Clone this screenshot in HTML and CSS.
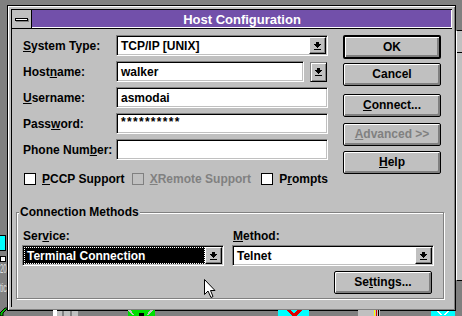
FILE: index.html
```html
<!DOCTYPE html>
<html>
<head>
<meta charset="utf-8">
<title>Host Configuration</title>
<link rel="stylesheet" href="styles.css">
</head>
<body>
<div class="desktop">
  <div class="behind"><div class="behind-line"></div></div>
  <div class="ico-cyan"></div>
  <div class="ico-small"></div>
  <div class="frag frag-a">20</div>
  <div class="frag frag-b">tic</div>
  <svg class="strip-left" width="8" height="12" viewBox="0 0 8 12">
    <path d="M0 9 L5 4 L8 4 L3 9 L3 12 L0 12 Z" fill="#00c000" stroke="#000" stroke-width="1"/>
  </svg>
  <svg class="strip-bottom" width="462" height="6" viewBox="0 0 462 6" shape-rendering="crispEdges">
    <rect x="53" y="0" width="4" height="6" fill="#fff"/>
    <rect x="57" y="1" width="21" height="5" fill="#c0c0c0"/>
    <rect x="62" y="1" width="2" height="5" fill="#808080"/>
    <rect x="70" y="1" width="2" height="5" fill="#808080"/>
    <rect x="128" y="0" width="27" height="6" fill="#00e000"/>
    <path d="M128 0 L132 5 L134 5 L131 0 Z M150 0 L147 5 L149 5 L153 0 Z" fill="#c0c0c0"/>
    <rect x="139" y="3" width="5" height="3" fill="#000"/>
    <rect x="278" y="0" width="31" height="6" fill="#00ffff"/>
    <path d="M286 0 L290 0 L294 3 L298 0 L303 0 L297 5 L296 6 L292 6 L291 5 Z" fill="#e00000"/>
    <rect x="358" y="0" width="22" height="6" fill="#c0c0c0"/>
    <rect x="374" y="0" width="1" height="6" fill="#ffff00"/>
    <rect x="376" y="0" width="1" height="6" fill="#e00000"/>
    <rect x="378" y="0" width="1" height="6" fill="#000"/>
    <rect x="431" y="1" width="24" height="5" fill="#00ffff"/>
    <path d="M436 1 L440 5 L442 5 L438 1 Z M449 1 L445 5 L443 5 L447 1 Z" fill="#fff"/>
  </svg>

  <div class="window">
    <div class="frame">
      <div class="titlebar">
        <div class="sysmenu"><span class="dash"></span></div>
        <div class="caption">Host Configuration</div>
      </div>
      <div class="client">
        <div class="top">
          <div class="form">
            <div class="row">
              <span class="lbl"><u>S</u>ystem Type:</span>
              <div class="sunken combo">
                <span class="val">TCP/IP [UNIX]</span>
                <span class="dd"><svg width="7" height="8" viewBox="0 0 7 8" shape-rendering="crispEdges"><path d="M2 0h3v2h2v1h-1v1h-1v1h-1v1h-1v-1h-1v-1h-1v-1h-1v-1h2z M0 7h7v1h-7z" fill="#000"/></svg></span>
              </div>
            </div>
            <div class="row">
              <span class="lbl">Host<u>n</u>ame:</span>
              <div class="sunken edit edit-short"><span class="val">walker</span></div>
              <span class="dd dd-sep"><svg width="7" height="8" viewBox="0 0 7 8" shape-rendering="crispEdges"><path d="M2 0h3v2h2v1h-1v1h-1v1h-1v1h-1v-1h-1v-1h-1v-1h-1v-1h2z M0 7h7v1h-7z" fill="#000"/></svg></span>
            </div>
            <div class="row">
              <span class="lbl"><u>U</u>sername:</span>
              <div class="sunken edit"><span class="val">asmodai</span></div>
            </div>
            <div class="row">
              <span class="lbl">Pass<u>w</u>ord:</span>
              <div class="sunken edit"><span class="val pw">**********</span></div>
            </div>
            <div class="row">
              <span class="lbl">Phone Num<u>b</u>er:</span>
              <div class="sunken edit"><span class="val"></span></div>
            </div>
            <div class="checks">
              <div class="check check-a"><span class="box"></span><span><u>P</u>CCP Support</span></div>
              <div class="check check-b disabled"><span class="box"></span><span><u>X</u>Remote Support</span></div>
              <div class="check"><span class="box"></span><span>P<u>r</u>ompts</span></div>
            </div>
          </div>
          <div class="buttons">
            <div class="btn default">OK</div>
            <div class="btn b-cancel">Cancel</div>
            <div class="btn b-connect"><span><u>C</u>onnect...</span></div>
            <div class="btn b-adv disabled"><span><u>A</u>dvanced &gt;&gt;</span></div>
            <div class="btn b-help"><span><u>H</u>elp</span></div>
          </div>
        </div>
        <div class="group">
          <div class="legend">Connection Methods</div>
          <div class="methods">
            <div class="col">
              <div class="lbl2">Ser<u>v</u>ice:</div>
              <div class="sunken combo">
                <span class="val sel">Terminal Connection</span>
                <span class="dd"><svg width="7" height="8" viewBox="0 0 7 8" shape-rendering="crispEdges"><path d="M2 0h3v2h2v1h-1v1h-1v1h-1v1h-1v-1h-1v-1h-1v-1h-1v-1h2z M0 7h7v1h-7z" fill="#000"/></svg></span>
              </div>
            </div>
            <div class="col">
              <div class="lbl2"><u>M</u>ethod:</div>
              <div class="sunken combo">
                <span class="val">Telnet</span>
                <span class="dd"><svg width="7" height="8" viewBox="0 0 7 8" shape-rendering="crispEdges"><path d="M2 0h3v2h2v1h-1v1h-1v1h-1v1h-1v-1h-1v-1h-1v-1h-1v-1h2z M0 7h7v1h-7z" fill="#000"/></svg></span>
              </div>
            </div>
          </div>
          <div class="settings-row">
            <div class="btn b-settings"><span>Se<u>t</u>tings...</span></div>
          </div>
        </div>
      </div>
    </div>
  </div>

  <svg class="cursor" width="12" height="19" viewBox="0 0 12 19">
    <path d="M0.5 0.5 L0.5 15.5 L4 12 L7 18.5 L9 17.5 L6.5 11.5 L11 11.5 Z" fill="#fff" stroke="#000" stroke-width="1"/>
  </svg>
</div>
</body>
</html>
```

FILE: styles.css
```css
* { box-sizing: border-box; }
html, body { margin: 0; padding: 0; background: #808080; }
body {
  font-family: "Liberation Sans", Arial, sans-serif;
  font-weight: bold;
  font-size: 12px;
  color: #000;
}
u { text-decoration: underline; text-underline-offset: 1px; text-decoration-thickness: 1px; }

.desktop {
  position: relative;
  width: 462px;
  height: 316px;
  overflow: hidden;
  background: #808080;
  padding: 5px 0 0 7px;
}

/* desktop leftovers */
.behind {
  position: absolute;
  left: 456px;
  top: 30px;
  width: 10px;
  height: 251px;
  background: #c0c0c0;
  border-top: 1px solid #000;
  border-bottom: 1px solid #000;
  border-left: 1px solid #fff;
}
.behind-line { margin-top: 21px; border-top: 1px solid #000; }
.ico-cyan {
  position: absolute; left: -5px; top: 235px;
  width: 11px; height: 16px;
  background: #00ffff; border: 1px solid #000;
}
.ico-small {
  position: absolute; left: 0; top: 256px;
  width: 6px; height: 6px;
  background: #fff; border: 1px solid #000;
}
.frag {
  position: absolute;
  left: 0;
  font-weight: normal;
  font-size: 12px;
  color: #e0e0e0;
  line-height: 12px;
  transform-origin: left top;
  white-space: nowrap;
}
.frag-a { top: 263px; transform: scaleX(0.5); }
.frag-b { top: 282px; transform: scaleX(0.55); }
.strip-left { position: absolute; left: 0; top: 304px; }
.strip-bottom { position: absolute; left: 0; top: 310px; }
.cursor { position: absolute; left: 204px; top: 279px; }

/* window */
.window {
  width: 449px;
  height: 306px;
  background: #c0c0c0;
  border: 1px solid #000;
  box-shadow: inset 1px 1px 0 #fff, inset -1px -1px 0 #808080;
  padding: 3px;
}
.frame {
  height: 100%;
  border-left: 1px solid #000;
  border-top: 1px solid #000;
  display: flex;
  flex-direction: column;
}
.titlebar {
  display: flex;
  height: 19px;
  border-bottom: 1px solid #000;
}
.sysmenu {
  width: 20px;
  background: #c0c0c0;
  border-right: 1px solid #000;
  display: flex;
  align-items: center;
  justify-content: center;
}
.dash {
  width: 13px;
  height: 3px;
  background: #fff;
  border: 1px solid #000;
  box-shadow: 1px 1px 0 #808080;
}
.caption {
  flex: 1;
  background: #7250aa;
  color: #fff;
  font-size: 13px;
  display: flex;
  align-items: center;
  justify-content: center;
  box-shadow: inset -1px -1px 0 #fff;
}
.client {
  flex: 1;
  padding-top: 6px;
}

/* top section */
.top { display: flex; margin-left: 11px; }
.form { width: 305px; }
.row {
  display: flex;
  align-items: center;
  height: 21px;
  margin-bottom: 5px;
}
.lbl { width: 93px; white-space: nowrap; }

.sunken {
  height: 21px;
  border: 1px solid;
  border-color: #808080 #fff #fff #808080;
  box-shadow: inset 1px 1px 0 #000, inset -1px -1px 0 #c0c0c0;
  background: #fff;
  padding: 1px;
  display: flex;
}
.edit { width: 212px; }
.edit-short { width: 188px; }
.combo { width: 212px; }
.val {
  flex: 1;
  display: flex;
  align-items: center;
  padding-left: 3px;
  white-space: nowrap;
}
.pw { letter-spacing: 1.3px; padding-bottom: 3px; }
.sel {
  background: #000;
  color: #fff;
  outline: 1px dotted #fff;
  outline-offset: -1px;
  padding-left: 3px;
}
.dd {
  width: 17px;
  background: #c0c0c0;
  border: 1px solid;
  border-color: #fff #000 #000 #fff;
  box-shadow: inset -1px -1px 0 #808080;
  display: flex;
  align-items: center;
  justify-content: center;
}
.dd-sep {
  height: 20px;
  margin-left: 6px;
  border-color: #808080 #000 #000 #808080;
  box-shadow: inset 1px 1px 0 #fff, inset -1px -1px 0 #808080;
}

.checks {
  display: flex;
  align-items: center;
  height: 12px;
  margin-top: 13px;
  margin-left: 1px;
}
.check { display: flex; align-items: center; white-space: nowrap; }
.check-a { width: 108px; }
.check-b { width: 130px; }
.box {
  width: 12px;
  height: 12px;
  background: #fff;
  border: 1px solid #000;
  margin-right: 6px;
  flex: none;
}
.disabled { color: #808080; }
.check.disabled .box { background: #c0c0c0; border-color: #808080; }

/* buttons */
.buttons {
  margin-left: 15px;
  width: 98px;
  display: flex;
  flex-direction: column;
}
.btn {
  width: 98px;
  height: 23px;
  background: #c0c0c0;
  border: 1px solid #000;
  border-radius: 2px;
  box-shadow: inset 1px 1px 0 #fff, inset -2px -2px 0 #808080;
  display: flex;
  align-items: center;
  justify-content: center;
  white-space: nowrap;
  padding-bottom: 1px;
}
.btn.default {
  height: 24px;
  border-width: 2px;
}
.b-cancel { margin-top: 4px; }
.b-connect { margin-top: 8px; }
.b-adv { margin-top: 6px; }
.b-help { margin-top: 5px; }

/* group box */
.group {
  margin: 27px 0 0 4px;
  width: 428px;
  height: 87px;
  border: 1px solid #808080;
  box-shadow: inset 1px 1px 0 #fff, 1px 1px 0 #fff;
  padding-left: 5px;
}
.legend {
  width: max-content;
  height: 14px;
  line-height: 14px;
  margin-top: -8px;
  margin-left: -3px;
  padding: 0 1px;
  background: #c0c0c0;
}
.methods {
  display: flex;
  gap: 8px;
  margin-top: 10px;
}
.col { width: 202px; }
.col .combo { width: 202px; }
.lbl2 {
  height: 14px;
  line-height: 14px;
  margin: 0 0 2px 1px;
}
.settings-row {
  display: flex;
  justify-content: flex-end;
  width: 412px;
  padding-right: 2px;
  margin-top: 5px;
}
```
